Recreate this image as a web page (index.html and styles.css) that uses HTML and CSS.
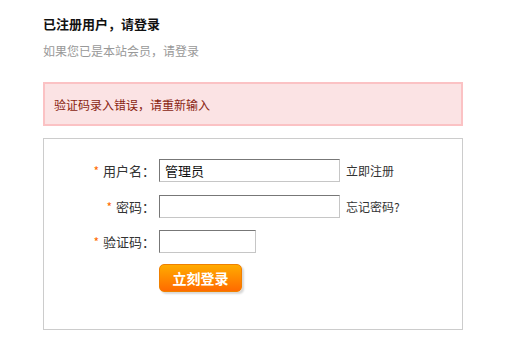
FILE: index.html
```html
<!DOCTYPE html>
<html lang="zh-CN">
<head>
<meta charset="utf-8">
<title>登录</title>
<link rel="stylesheet" href="styles.css">
</head>
<body>
<div class="page">
  <h2 class="title">已注册用户，请登录</h2>
  <p class="subtitle">如果您已是本站会员，请登录</p>
  <div class="error">验证码录入错误，请重新输入</div>
  <form class="login">
    <div class="grid">
      <label class="label first"><span class="star">*</span>用户名：</label>
      <div class="field first"><input class="input" type="text" value="管理员"><a class="link">立即注册</a></div>
      <label class="label"><span class="star">*</span>密码：</label>
      <div class="field"><input class="input" type="password"><a class="link">忘记密码?</a></div>
      <label class="label"><span class="star">*</span>验证码：</label>
      <div class="field"><input class="input short" type="text"></div>
      <span></span>
      <div class="field"><button class="btn" type="button">立刻登录</button></div>
    </div>
  </form>
</div>
</body>
</html>
```
FILE: styles.css
```css
* { box-sizing: border-box; }
html, body { margin: 0; padding: 0; background: #fff; }
body {
  font-family: "Noto Sans CJK SC", "Noto Sans", sans-serif;
  font-size: 12px;
  color: #333;
}
.page {
  width: 420px;
  margin-left: 43px;
  padding-top: 15px;
}
.title {
  margin: 0;
  font-size: 13px;
  font-weight: bold;
  color: #111;
  line-height: 18px;
}
.subtitle {
  margin: 9px 0 0;
  font-size: 12px;
  color: #999;
  line-height: 18px;
}
.error {
  margin-top: 22px;
  height: 44px;
  padding: 0 9px;
  display: flex;
  align-items: center;
  background: #fbe3e4;
  border: 2px solid #fbc2c4;
  color: #8a1f11;
  font-size: 12px;
}
.login {
  margin-top: 12px;
  border: 1px solid #cccccc;
  height: 192px;
  padding-top: 20px;
}
.grid {
  display: grid;
  grid-template-columns: 111px 1fr;
  column-gap: 4px;
  row-gap: 12px;
  align-items: start;
}
.first { margin-bottom: 1px; }
.label {
  text-align: right;
  font-size: 13px;
  color: #333;
  line-height: 23px;
}
.star {
  color: #ff6a00;
  font-size: 12px;
  margin-right: 4px;
}
.field {
  display: flex;
  align-items: center;
}
.input {
  width: 181px;
  height: 23px;
  margin: 0;
  padding: 0 5px;
  border: 1px solid;
  border-color: #777 #c6c6c6 #c6c6c6 #777;
  font-family: "Noto Sans CJK SC", sans-serif;
  font-size: 13px;
  color: #111;
  background: #fff;
  outline: none;
}
.input.short { width: 97px; }
.link {
  margin-left: 6px;
  font-size: 12px;
  color: #333;
}
.btn {
  margin-top: -1px;
  width: 83px;
  height: 28px;
  border: 1px solid #f08000;
  border-radius: 5px;
  background: linear-gradient(#ffab00, #ff6a00);
  color: #fff;
  font-family: "Noto Sans CJK SC", sans-serif;
  font-size: 14px;
  font-weight: bold;
  box-shadow: 2px 2px 2px #d8d8d8;
  padding: 0;
}
```
